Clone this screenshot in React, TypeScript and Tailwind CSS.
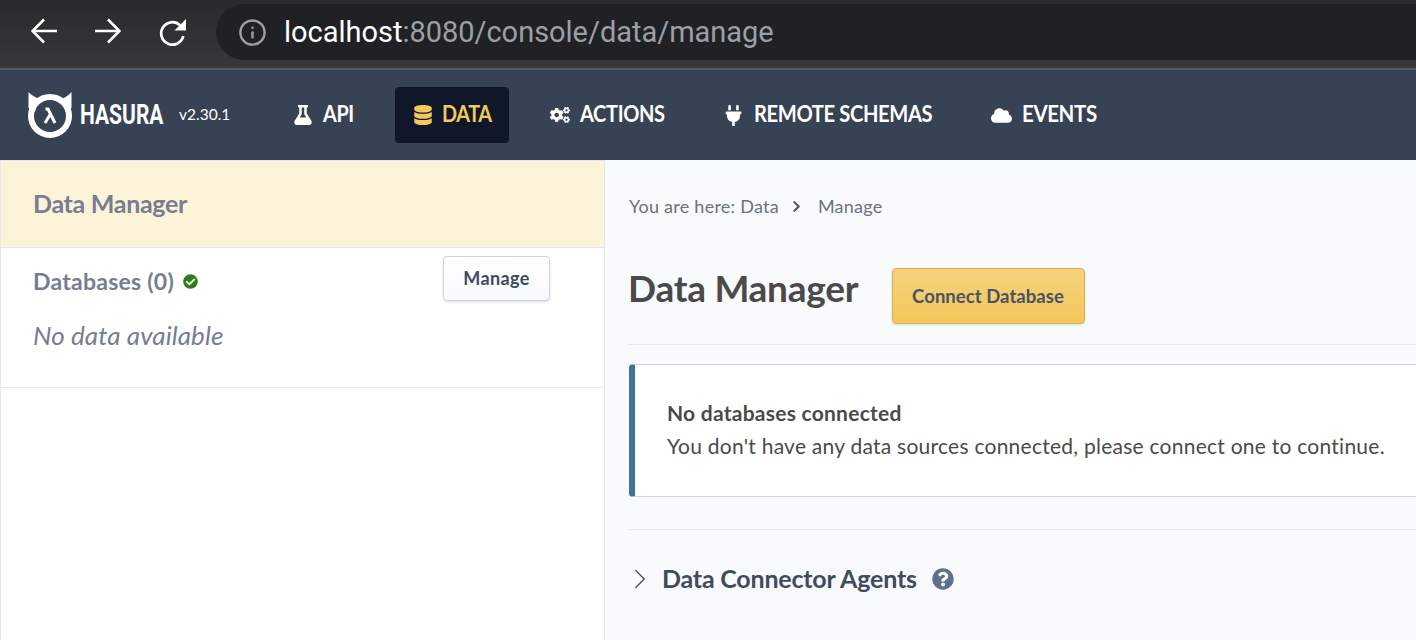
import React from 'react'
import { Info, ChevronRight } from 'lucide-react'
import { FaFlask, FaDatabase, FaCogs, FaPlug, FaCloud, FaCheckCircle, FaQuestionCircle, FaChevronRight } from 'react-icons/fa'

const HasuraLogo = () => (
  <svg width="46" height="46" viewBox="0 0 46 46" fill="none">
    <path d="M0.5 0 C3 3 7 5 10 6.5 L7 20 L0.5 16 Z" fill="#fff" />
    <path d="M43.5 0 C41 3 38 5 35 6.5 L38 20 L43.5 16 Z" fill="#fff" />
    <circle cx="22" cy="24" r="19" stroke="#fff" strokeWidth="6" />
    <path d="M17 31 L22.5 22 L20 17 H17.5 M22.5 22 L27 31" stroke="#fff" strokeWidth="3" />
  </svg>
)

const NavItem = ({ icon, label, labelClass, active }: { icon: React.ReactNode; label: string; labelClass: string; active?: boolean }) => (
  <div className={`flex items-center gap-[10px] h-14 rounded pl-[18px] pr-[17px] ${active ? 'bg-[#101728] text-[#f2c95c]' : 'text-white'}`}>
    {icon}
    <span className={`text-[22px] font-bold tracking-[-0.4px] whitespace-nowrap origin-left pb-[3px] ${labelClass}`}>{label}</span>
  </div>
)

export default function App() {
  return (
    <div className="h-[640px] w-[1416px] overflow-hidden flex flex-col bg-white font-['Lato',sans-serif]">
      {/* Browser bar */}
      <div className="h-[70px] shrink-0 flex items-start bg-gradient-to-b from-[#2a2a2c] to-[#38383a] border-b-2 border-[#59595b] pt-1">
        <div className="w-[216px] h-14 flex items-center pl-[31px] gap-[38px]">
          <svg width="26" height="26" viewBox="0 0 26 26" fill="none" stroke="#fff" strokeWidth="2.6" className="mb-[2px]">
            <path d="M26 13 H2 M13 1.5 L1.5 13 L13 24.5" />
          </svg>
          <svg width="26" height="26" viewBox="0 0 26 26" fill="none" stroke="#fff" strokeWidth="2.6" className="mb-[2px]">
            <path d="M0 13 H24 M13 1.5 L24.5 13 L13 24.5" />
          </svg>
          <svg width="27" height="27" viewBox="0 0 27 27" fill="none">
            <path d="M21 6.2 A11.2 11.2 0 1 0 24.3 17" stroke="#fff" strokeWidth="2.7" />
            <path d="M27 0 V11.5 H15.5 Z" fill="#fff" />
          </svg>
        </div>
        <div className="flex-1 h-14 bg-[#202124] rounded-l-full flex items-center pl-[22px] gap-[17px]">
          <Info size={29} strokeWidth={2} className="text-[#9aa0a6]" />
          <span className="pt-[2px] text-[29px] tracking-[-0.02px] font-['Roboto',sans-serif] text-[#9aa0a6]">
            <span className="text-white">localhost</span>:8080/console/data/manage
          </span>
        </div>
      </div>

      {/* Console nav */}
      <div className="h-[90px] shrink-0 bg-[#374254] flex items-center pl-7">
        <HasuraLogo />
        <span className="ml-[6px] w-[81px] whitespace-nowrap text-[28px] font-bold text-white font-['Roboto',sans-serif] scale-x-75 origin-left">HASURA</span>
        <span className="ml-[18px] w-[50px] whitespace-nowrap text-[15.5px] text-white">v2.30.1</span>
        <div className="flex items-center ml-[46px]">
          <NavItem icon={<FaFlask size={20} />} label="API" labelClass="w-[31px] scale-x-90" />
          <div className="w-6" />
          <NavItem active icon={<FaDatabase size={20} className="-mr-px" />} label="DATA" labelClass="w-[50px] scale-x-90" />
          <div className="w-[23px]" />
          <NavItem icon={<FaCogs size={20} />} label="ACTIONS" labelClass="w-[85px] scale-x-[0.91]" />
          <div className="w-[23px]" />
          <NavItem icon={<FaPlug size={21} />} label="REMOTE SCHEMAS" labelClass="w-[179px] scale-x-[0.915]" />
          <div className="w-[23px]" />
          <NavItem icon={<FaCloud size={21} />} label="EVENTS" labelClass="w-[75px] scale-x-[0.93]" />
        </div>
      </div>

      <div className="flex-1 flex min-h-0">
        {/* Sidebar */}
        <div className="w-[605px] shrink-0 border-r border-l border-[#e5e7eb] bg-white">
          <div className="h-[88px] bg-[#fdf3d8] border-b border-t border-[#e5e7eb] flex items-center pl-8">
            <span className="text-[25px] font-bold text-[#767e93] tracking-[-0.3px]">Data Manager</span>
          </div>
          <div className="h-[140px] border-b border-[#e5e7eb] pl-8 pr-[54px]">
            <div className="flex items-start justify-between pt-2">
              <div className="flex items-center gap-[9px] pt-[8px]">
                <span className="text-[23px] font-bold text-[#767e93] tracking-[0.25px]">Databases (0)</span>
                <FaCheckCircle size={15} className="text-[#2f7d1f]" />
              </div>
              <button className="w-[107px] h-[45px] rounded border border-[#ccd3e2] bg-gradient-to-b from-white to-[#f8fafc] shadow-sm text-[18px] font-bold tracking-[0.35px] text-[#3f4a5e]">
                Manage
              </button>
            </div>
            <div className="mt-[15px] text-[26px] italic text-[#767e93] tracking-[0.1px]">No data available</div>
          </div>
        </div>

        {/* Main */}
        <div className="flex-1 bg-[#f8fafc] pl-6 min-w-0">
          <div className="flex items-center h-[20px] mt-[36px] text-[18px] tracking-[0.25px] text-[#6b7280]">
            <span>You are here: Data</span>
            <FaChevronRight size={13} className="ml-[11px] mr-[15px] text-[#4b5563]" />
            <span>Manage</span>
          </div>
          <div className="flex items-center h-[58px] mt-[51px]">
            <h1 className="-ml-px text-[37px] font-bold text-[#4a4a4a] tracking-[-0.27px] w-[264px] mb-[16px]">Data Manager</h1>
            <button className="w-[193px] h-[56px] pt-[2px] pr-[1px] rounded border border-[#d9ae52] bg-gradient-to-b from-[#f5d27b] to-[#f2c75c] shadow-sm text-[18.5px] tracking-[0.05px] font-bold text-[#4a5264]">
              Connect Database
            </button>
          </div>
          <div className="border-b border-[#e5e7eb] mt-[19px]" />
          <div className="mt-[19px] h-[133px] bg-white border-y border-[#ccd6e3] border-l-[6px] border-l-[#3f7396] rounded-l flex flex-col justify-center pl-8 pb-[4px]">
            <div className="text-[21px] font-bold text-[#4a4a4a] leading-[33px] tracking-[0.25px]">No databases connected</div>
            <div className="text-[21px] text-[#4a4a4a] leading-[33px] tracking-[0.25px] whitespace-nowrap">You don't have any data sources connected, please connect one to continue.</div>
          </div>
          <div className="border-b border-[#e5e7eb] mt-[32px]" />
          <div className="flex items-center h-[30px] mt-[34px]">
            <ChevronRight size={34} strokeWidth={1} className="text-[#4b5563] -ml-[6px]" />
            <span className="ml-[5px] text-[25px] font-bold text-[#414b60] tracking-[-0.2px]">Data Connector Agents</span>
            <FaQuestionCircle size={22} className="ml-[15px] text-[#5f6f8c]" />
          </div>
        </div>
      </div>
    </div>
  )
}
